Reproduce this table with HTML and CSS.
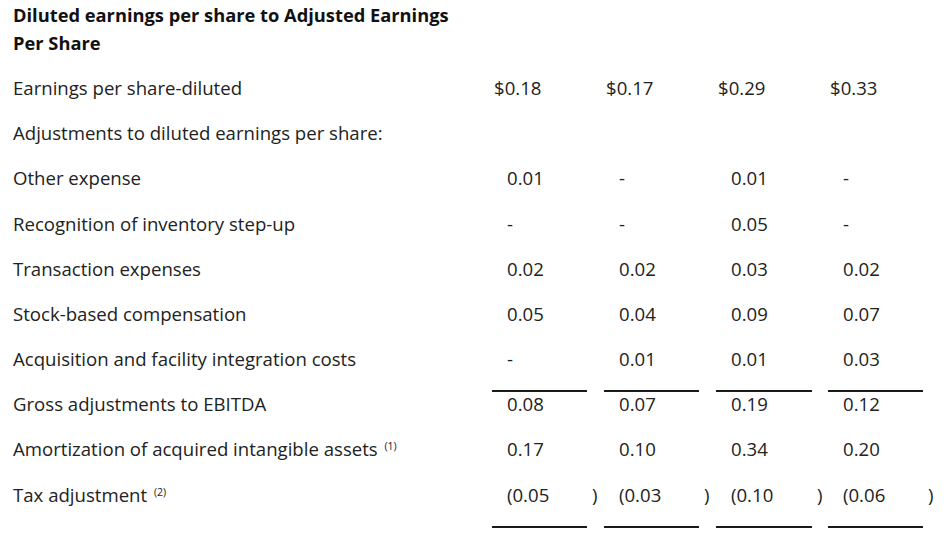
FILE: index.html
```html
<!DOCTYPE html>
<html>
<head>
<meta charset="utf-8">
<link rel="stylesheet" href="styles.css">
</head>
<body>
<div class="page">
  <h1 class="title">Diluted earnings per share to Adjusted Earnings<br>Per Share</h1>
  <div class="table">
    <div class="row">
      <div class="label">Earnings per share-diluted</div>
      <div class="val dollar">$0.18</div><div class="par"></div>
      <div class="val dollar">$0.17</div><div class="par"></div>
      <div class="val dollar">$0.29</div><div class="par"></div>
      <div class="val dollar">$0.33</div><div class="par"></div>
    </div>
    <div class="row">
      <div class="label">Adjustments to diluted earnings per share:</div>
    </div>
    <div class="row">
      <div class="label">Other expense</div>
      <div class="val">0.01</div><div class="par"></div>
      <div class="val">-</div><div class="par"></div>
      <div class="val">0.01</div><div class="par"></div>
      <div class="val">-</div><div class="par"></div>
    </div>
    <div class="row">
      <div class="label">Recognition of inventory step-up</div>
      <div class="val">-</div><div class="par"></div>
      <div class="val">-</div><div class="par"></div>
      <div class="val">0.05</div><div class="par"></div>
      <div class="val">-</div><div class="par"></div>
    </div>
    <div class="row">
      <div class="label">Transaction expenses</div>
      <div class="val">0.02</div><div class="par"></div>
      <div class="val">0.02</div><div class="par"></div>
      <div class="val">0.03</div><div class="par"></div>
      <div class="val">0.02</div><div class="par"></div>
    </div>
    <div class="row">
      <div class="label">Stock-based compensation</div>
      <div class="val">0.05</div><div class="par"></div>
      <div class="val">0.04</div><div class="par"></div>
      <div class="val">0.09</div><div class="par"></div>
      <div class="val">0.07</div><div class="par"></div>
    </div>
    <div class="row">
      <div class="label">Acquisition and facility integration costs</div>
      <div class="val">-</div><div class="par"></div>
      <div class="val">0.01</div><div class="par"></div>
      <div class="val">0.01</div><div class="par"></div>
      <div class="val">0.03</div><div class="par"></div>
    </div>
    <div class="row">
      <div class="label">Gross adjustments to EBITDA</div>
      <div class="val ruled">0.08</div><div class="par"></div>
      <div class="val ruled">0.07</div><div class="par"></div>
      <div class="val ruled">0.19</div><div class="par"></div>
      <div class="val ruled">0.12</div><div class="par"></div>
    </div>
    <div class="row">
      <div class="label">Amortization of acquired intangible assets <sup class="note">(1)</sup></div>
      <div class="val">0.17</div><div class="par"></div>
      <div class="val">0.10</div><div class="par"></div>
      <div class="val">0.34</div><div class="par"></div>
      <div class="val">0.20</div><div class="par"></div>
    </div>
    <div class="row">
      <div class="label">Tax adjustment <sup class="note">(2)</sup></div>
      <div class="val">(0.05</div><div class="par">)</div>
      <div class="val">(0.03</div><div class="par">)</div>
      <div class="val">(0.10</div><div class="par">)</div>
      <div class="val">(0.06</div><div class="par">)</div>
    </div>
    <div class="row">
      <div class="label">Adjusted Earnings Per Share - diluted</div>
      <div class="val dollar ruled">$0.38</div><div class="par"></div>
      <div class="val dollar ruled">$0.31</div><div class="par"></div>
      <div class="val dollar ruled">$0.72</div><div class="par"></div>
      <div class="val dollar ruled">$0.59</div><div class="par"></div>
    </div>
  </div>
</div>
</body>
</html>
```

FILE: styles.css
```css
html, body {
  margin: 0;
  padding: 0;
  background: #ffffff;
}
.page {
  padding: 1px 0 0 13px;
  font-family: "Open Sans", "Liberation Sans", Arial, sans-serif;
  font-size: 18.6px;
  color: #222222;
  height: 533px;
  overflow: hidden;
  box-sizing: border-box;
}
.title {
  margin: 0 0 8.4px 0;
  font-size: 18.3px;
  font-weight: bold;
  line-height: 28px;
  color: #111;
}
.row {
  display: grid;
  grid-template-columns: 479px 95px 17px 95px 17px 96px 16px 95px 17px;
  height: 45.2px;
  align-items: center;
  line-height: 24px;
}
.label {
  white-space: nowrap;
}
.val {
  padding-left: 15px;
  white-space: nowrap;
}
.val.dollar {
  padding-left: 2px;
}
.val.ruled {
  align-self: start;
  margin-top: 8.6px;
  border-top: 2px solid #1a1a1a;
}
.par {
  padding-left: 5px;
}
.note {
  font-size: 10.5px;
  vertical-align: 6px;
  line-height: 0;
  margin-left: 2px;
}
```
